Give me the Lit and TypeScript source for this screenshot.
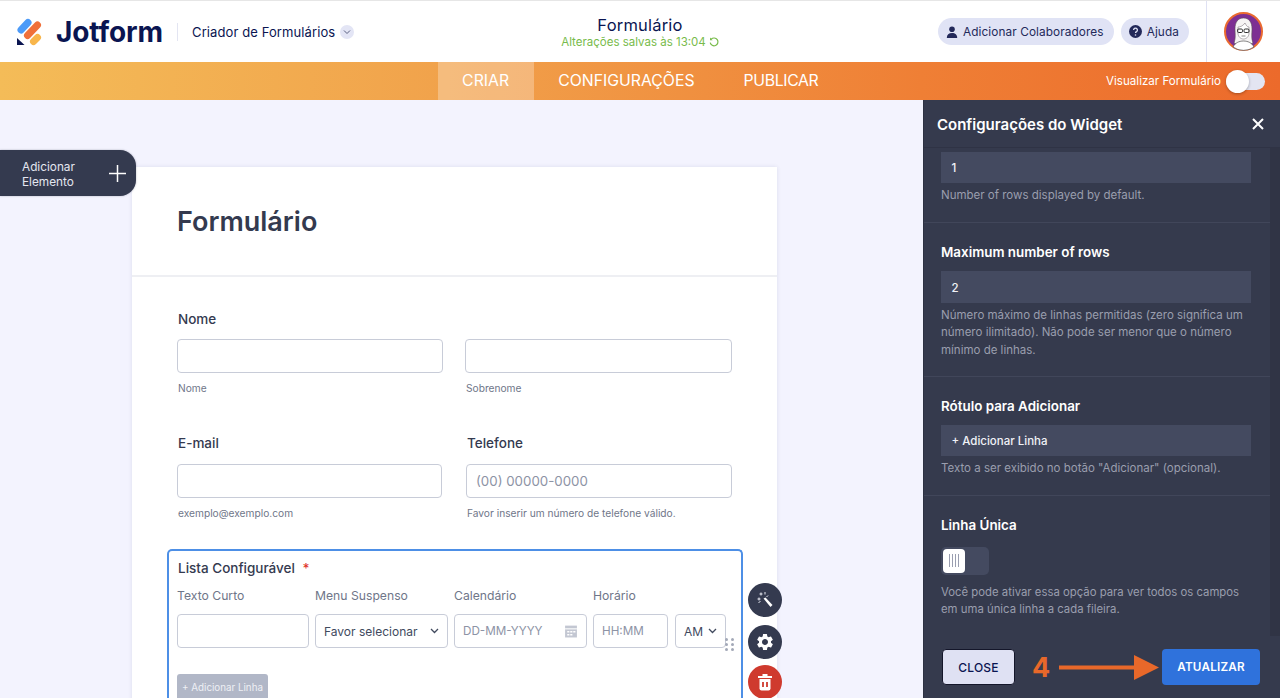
import { LitElement, css, html } from "lit";
import { customElement } from "lit/decorators.js";

@customElement("app-root")
export class AppRoot extends LitElement {
  static styles = css`
    :host {
      display: flex;
      flex-direction: column;
      height: 698px;
      overflow: hidden;
      font-family: Inter, "Liberation Sans", sans-serif;
      color: #2c3345;
      background: #f3f3fe;
    }
    * { box-sizing: border-box; }

    /* top bar */
    .topbar {
      height: 62px;
      flex: none;
      display: grid;
      grid-template-columns: 1fr auto 1fr;
      align-items: center;
      background: #fff;
      border-top: 1px solid #e6e6e6;
    }
    .brand { display: flex; align-items: center; padding-left: 17px; }
    .logo { width: 25px; height: 28px; display: block; }
    .wordmark {
      margin-left: 14px;
      font: 700 28px/32px Inter, sans-serif;
      letter-spacing: -0.1px;
      color: #0a1551;
    }
    .brand-sep { width: 1px; height: 18px; background: #e3e5f2; margin: 0 14px; }
    .brand-name { font-size: 13px; letter-spacing: 0.1px; color: #0a1551; }
    .chev {
      width: 14px; height: 14px; margin-left: 5px; border-radius: 50%;
      background: #e3e5f5; display: flex; align-items: center; justify-content: center;
    }
    .doc { text-align: center; }
    .doc-title { font-size: 16.5px; line-height: 20px; color: #0a1551; letter-spacing: 0.2px; }
    .doc-saved {
      font-size: 11.5px; line-height: 14px; color: #78bb4b;
      display: flex; align-items: center; gap: 3px;
    }
    .top-right { display: flex; justify-content: flex-end; align-items: center; height: 100%; }
    .pill {
      height: 27px; border-radius: 14px; background: #e0e3f5; color: #23295a;
      font-size: 11.8px; display: flex; align-items: center; gap: 5px; padding: 0 10px 0 8px;
      margin-left: 7px; letter-spacing: 0.1px;
    }
    .avatar-cell {
      width: 74px; margin-left: 17px; height: 100%;
      border-left: 1px solid #dfe1f3;
      display: flex; align-items: center; justify-content: center;
    }

    /* orange nav */
    .nav {
      height: 38px;
      flex: none;
      display: grid;
      grid-template-columns: 1fr auto 1fr;
      background: linear-gradient(90deg, #f4bc58 0%, #f1a24b 35%, #ef7f35 72%, #ec6a2b 100%);
      color: #fff;
    }
    .tabs { display: flex; grid-column: 2; }
    .tab { padding: 0 24.5px; font-size: 15.8px; line-height: 38px; }
    .tab:last-child { padding-right: 24px; letter-spacing: -0.35px; }
    .tab.on { background: rgba(255, 255, 255, 0.28); }
    .preview {
      display: flex; align-items: center; justify-content: flex-end;
      padding-right: 15px; font-size: 11.6px; gap: 5px;
    }
    .switch { width: 39px; height: 17px; border-radius: 9px; background: #e3e5f2; position: relative; }
    .switch i {
      position: absolute; left: 0; top: -3px; width: 23px; height: 23px;
      border-radius: 50%; background: #fff; box-shadow: 0 1px 3px rgba(0, 0, 0, 0.3);
    }

    /* main */
    .main { flex: 1; display: flex; min-height: 0; }
    .canvas { flex: 1; min-width: 0; position: relative; overflow: hidden; padding: 67px 0 0 132px; }
    .add {
      position: absolute; left: 0; top: 50px; width: 136px; height: 46px;
      border-radius: 0 16px 16px 0; background: #343a4f; color: #e4e6f0;
      display: flex; align-items: center; justify-content: space-between;
      padding: 4px 10px 0 22px; font-size: 11.8px; line-height: 15px;
      box-shadow: 0 0 2px rgba(52, 58, 79, 0.4); z-index: 2;
    }
    .add svg { margin-top: -4px; }
    .card {
      width: 645px; background: #fff; height: 600px;
      box-shadow: 0 0 4px rgba(60, 65, 110, 0.12);
    }
    .card-head {
      height: 110px; display: flex; align-items: center; padding: 0 0 0 45px;
      border-bottom: 2px solid #eeeff3;
    }
    .card-head h1 { margin: 0; font-size: 27px; font-weight: 600; color: #343a4f; }
    .card-body { padding: 33px 0 0 35px; }
    .row { display: grid; margin-left: 10px; }
    .row.a { grid-template-columns: 266px 267px; column-gap: 22px; }
    .row.b { grid-template-columns: 265px 266px; column-gap: 24px; margin-top: 39px; }
    .lab { font-size: 13.5px; line-height: 18px; font-weight: 500; color: #343a4f; padding-left: 1px; }
    .box {
      height: 34px; border: 1px solid #c8ccd8; border-radius: 4px; background: #fff;
      display: flex; align-items: center; color: #8d93a5; font-size: 13.3px; padding: 0 9px;
      margin-top: 11px; justify-content: space-between;
    }
    .row.b .box { margin-top: 12px; }
    .sub { font-size: 10.2px; line-height: 14px; margin-top: 8px; color: #6f7689; padding-left: 1px; }
    .list {
      position: relative; margin-top: 29px; width: 576px; height: 170px;
      border: 2px solid #4d8fe6; border-bottom: 0; border-radius: 5px 5px 0 0; padding: 8px 0 0 8px;
    }
    .list-title { font-size: 13.5px; line-height: 18px; font-weight: 500; color: #343a4f; padding-left: 1px; }
    .list-title b { color: #e0352b; margin-left: 4px; font-weight: 500; }
    .cells {
      display: grid; grid-template-columns: 132px 133px 133px 75px 52px; column-gap: 6px; margin-top: 11px;
    }
    .cell-lab { font-size: 12.2px; line-height: 16px; color: #6f7689; grid-row: 1; }
    .cell-box { grid-row: 2; padding: 0 8px; margin-top: 10px; font-size: 11.7px; }
    .cell-box.val { color: #414a5e; font-size: 12px; }
    .cell-box.am { margin-left: 1px; width: 51px; }
    .addline {
      width: 91px; height: 30px; margin-top: 26px; background: #b1b7c7; border-radius: 3px;
      color: #eef0f5; font-size: 9.8px; line-height: 28px; text-align: center;
    }
    .dots {
      position: absolute; left: 556px; top: 87px; display: grid;
      grid-template-columns: 3px 3px; gap: 2px 3px;
    }
    .dots i { width: 3px; height: 3px; border-radius: 50%; background: #a3a9b8; }
    .fab {
      position: absolute; left: 579px; width: 34px; height: 34px; border-radius: 50%;
      background: #343a4f; display: flex; align-items: center; justify-content: center;
    }
    .fab.wand { top: 32px; }
    .fab.gear { top: 74px; }
    .fab.red { top: 114px; background: #cf3a2e; }

    /* widget panel */
    .panel {
      width: 357px; flex: none; display: flex; flex-direction: column; background: #353a4d;
      border-left: 1px solid #2d3142; color: #fff;
    }
    .panel-head {
      height: 48px; flex: none; display: flex; align-items: center; justify-content: space-between;
      padding: 1px 16px 0 13px; font-size: 15px; font-weight: 600; border-bottom: 1px solid #2f3345;
    }
    .panel-body { flex: 1; min-height: 0; display: flex; overflow: hidden; }
    .sections { width: 346px; flex: none; }
    .scroll { flex: 1; background: #303445; }
    .section { padding: 20px 19px 17px 17px; border-bottom: 1px solid #41465a; }
    .section:first-child { padding-top: 4px; }
    .section:last-child { border-bottom: 0; }
    .section h3 { margin: 0; font-size: 13.4px; line-height: 18px; font-weight: 600; }
    .field {
      height: 31px; background: #444a60; font-size: 11.5px; line-height: 31px; font-weight: 500;
      padding: 1px 0 0 10.5px; margin-top: 10px; color: #f1f2f7;
    }
    .field.tall { height: 32px; line-height: 32px; }
    .section:first-child .field { margin-top: 0; }
    .hint { margin: 4px 0 0; font-size: 11.5px; line-height: 17.5px; color: #9a9eae; }
    .grid-toggle {
      width: 48px; height: 28px; margin: 13px 0 9px; border-radius: 5px; background: #444a60;
      padding: 2px;
    }
    .grid-toggle i {
      display: flex; gap: 2px; justify-content: center; align-items: center;
      width: 22px; height: 24px; background: #fff; border-radius: 4px;
    }
    .grid-toggle u { width: 1px; height: 13px; background: #9a9eb0; display: block; }
    .grid-toggle + .hint { font-size: 11.35px; }
    .panel-foot {
      height: 62px; flex: none; display: flex; align-items: center; padding: 0 20px 0 18px;
    }
    .btn {
      height: 36px; border-radius: 4px; font-size: 12px; font-weight: 500;
      display: flex; align-items: center; justify-content: center; letter-spacing: 0.2px;
    }
    .close { width: 73px; background: #dfe1f3; color: #0a1551; border: 1px solid #14162a; }
    .update { width: 98px; background: #2f72dc; color: #fff; font-size: 11.7px; font-weight: 600; margin-left: 3px; }
    .step { margin-left: 17px; font-size: 27px; font-weight: 700; color: #e8682a; width: 27px; }
    .arrow { width: 100px; height: 25px; display: block; flex: none; }
  `;

  render() {
    return html`
      <div class="topbar">
        <div class="brand">
          <svg class="logo" viewBox="17 15 25 28">
            <line x1="21" y1="27" x2="28" y2="19.5" stroke="#4d9bf8" stroke-width="7" stroke-linecap="round" />
            <line x1="27.5" y1="32.5" x2="37.5" y2="22" stroke="#f0703a" stroke-width="7" stroke-linecap="round" />
            <line x1="33.5" y1="38.5" x2="37.5" y2="34.5" stroke="#f8b64c" stroke-width="7" stroke-linecap="round" />
            <polygon points="17,35 17,42 24.5,42" fill="#0a1551" />
          </svg>
          <span class="wordmark">Jotform</span>
          <span class="brand-sep"></span>
          <span class="brand-name">Criador de Formulários</span>
          <span class="chev">
            <svg width="8" height="6" viewBox="0 0 8 6"><path d="M1 1.500l3 3 3-3" fill="none" stroke="#5a6080" stroke-width="1" /></svg>
          </span>
        </div>
        <div class="doc">
          <div class="doc-title">Formulário</div>
          <div class="doc-saved">
            Alterações salvas às 13:04
            <svg width="10" height="10" viewBox="0 0 10 10">
              <path d="M2.200 2.200A3.900 3.900 0 1 1 1.200 5.600" fill="none" stroke="#78bb4b" stroke-width="1.200" />
              <path d="M1 0.600v2.600h2.600z" fill="#78bb4b" />
            </svg>
          </div>
        </div>
        <div class="top-right">
          <div class="pill">
            <svg width="12" height="12" viewBox="0 0 12 12">
              <circle cx="6" cy="3.200" r="2.800" fill="#23295a" />
              <path d="M0.800 12c0-3.400 2-5 5.200-5s5.200 1.600 5.200 5z" fill="#23295a" />
            </svg>
            Adicionar Colaboradores
          </div>
          <div class="pill">
            <svg width="13" height="13" viewBox="0 0 13 13">
              <circle cx="6.500" cy="6.500" r="6.500" fill="#23295a" />
              <path d="M4.600 5a1.900 1.900 0 1 1 2.900 1.600c-.7.4-1 .7-1 1.400" fill="none" stroke="#e0e3f5" stroke-width="1.300" />
              <circle cx="6.500" cy="10" r=".8" fill="#e0e3f5" />
            </svg>
            Ajuda
          </div>
          <div class="avatar-cell">
            <svg width="39" height="39" viewBox="0 0 39 39">
              <circle cx="19.500" cy="19.500" r="18.500" fill="#7d2f93" stroke="#ea6a30" stroke-width="2" />
              <path d="M10 31c2-5 1-10 1-14 0-7 3-11 8.500-11S28 10 28 17c0 4-1 9 1 14-3 2-16 2-19 0z" fill="#f6f4f4" stroke="#5a5058" stroke-width=".6" />
              <path d="M14 15c2 0 5-1 7-4 1 2 2 4 4 4v6c0 4-3 6-5.500 6S14 25 14 21z" fill="#fff" stroke="#6a6068" stroke-width=".5" />
              <rect x="13.500" y="17" width="5" height="3.500" rx="1.200" fill="none" stroke="#2c2c2c" stroke-width="1" />
              <rect x="20" y="17" width="5" height="3.500" rx="1.200" fill="none" stroke="#2c2c2c" stroke-width="1" />
              <path d="M17.500 24h4" stroke="#555" stroke-width=".7" />
              <path d="M9 35c2-4 6-6 10.500-6S28 31 30 35a18 18 0 0 1-21 0z" fill="#fff" stroke="#333" stroke-width=".6" />
            </svg>
          </div>
        </div>
      </div>

      <div class="nav">
        <div class="tabs">
          <div class="tab on">CRIAR</div>
          <div class="tab">CONFIGURAÇÕES</div>
          <div class="tab">PUBLICAR</div>
        </div>
        <div class="preview">Visualizar Formulário <span class="switch"><i></i></span></div>
      </div>

      <div class="main">
        <div class="canvas">
          <div class="add">
            <span>Adicionar<br />Elemento</span>
            <svg width="17" height="17" viewBox="0 0 17 17"><path d="M8.500 0v17M0 8.500h17" stroke="#fff" stroke-width="1.500" /></svg>
          </div>
          <div class="card">
            <div class="card-head"><h1>Formulário</h1></div>
            <div class="card-body">
              <div class="row a">
                <div class="col"><div class="lab">Nome</div><div class="box"></div><div class="sub">Nome</div></div>
                <div class="col"><div class="lab">&nbsp;</div><div class="box"></div><div class="sub">Sobrenome</div></div>
              </div>
              <div class="row b">
                <div class="col"><div class="lab">E-mail</div><div class="box"></div><div class="sub">exemplo@exemplo.com</div></div>
                <div class="col"><div class="lab">Telefone</div><div class="box">(00) 00000-0000</div><div class="sub">Favor inserir um número de telefone válido.</div></div>
              </div>
              <div class="list">
                <div class="list-title">Lista Configurável <b>*</b></div>
                <div class="cells">
                  <div class="cell-lab">Texto Curto</div>
                  <div class="cell-lab">Menu Suspenso</div>
                  <div class="cell-lab">Calendário</div>
                  <div class="cell-lab">Horário</div>
                  <div class="cell-lab"></div>
                  <div class="box cell-box"></div>
                  <div class="box cell-box val">Favor selecionar ${chevron()}</div>
                  <div class="box cell-box">DD-MM-YYYY
                    <svg width="14" height="14" viewBox="0 0 13 13">
                      <path d="M1 1.500h11v11H1z" fill="#c3c7d2" />
                      <path d="M1 4.500h11" stroke="#fff" stroke-width="1" />
                      <path d="M3 6.500h2v1.500H3zM5.800 6.500h2v1.500h-2zM8.600 6.500h2v1.500h-2zM3 9.200h2v1.500H3zM5.800 9.200h2v1.500h-2z" fill="#fff" />
                    </svg>
                  </div>
                  <div class="box cell-box">HH:MM</div>
                  <div class="box cell-box val am">AM ${chevron()}</div>
                </div>
                <div class="addline">+ Adicionar Linha</div>
                <div class="dots"><i></i><i></i><i></i><i></i><i></i><i></i></div>
                <div class="fab wand">
                  <svg width="18" height="18" viewBox="0 0 18 18">
                    <path d="M7.500 7.500l2-1 7 7.500-2 2z" fill="#fff" />
                    <path d="M5 1.500v3M3.500 3h3M1.500 8h3M3 6.500v3M9 1v2.500M12 4.500l-1.500 1.500M2.500 12l2-2" stroke="#e6e8f0" stroke-width="1" fill="none" />
                  </svg>
                </div>
                <div class="fab gear">
                  <svg width="20" height="20" viewBox="0 0 24 24"><path fill="#fff" d="M19.140 12.940c.04-.3.06-.61.06-.94 0-.32-.02-.64-.07-.94l2.030-1.580a.49.49 0 0 0 .12-.61l-1.920-3.320a.488.488 0 0 0-.59-.22l-2.390.96c-.5-.38-1.030-.7-1.620-.94l-.36-2.540a.484.484 0 0 0-.48-.41h-3.840c-.24 0-.43.17-.47.41l-.36 2.540c-.59.24-1.130.57-1.620.94l-2.390-.96c-.22-.08-.47 0-.59.22L2.740 8.870c-.12.21-.08.47.12.61l2.030 1.580c-.05.3-.09.63-.09.94s.02.64.07.94l-2.030 1.580a.49.49 0 0 0-.12.61l1.920 3.320c.12.22.37.29.59.22l2.390-.96c.5.38 1.030.7 1.620.94l.36 2.540c.05.24.24.41.48.41h3.840c.24 0 .44-.17.47-.41l.36-2.540c.59-.24 1.130-.56 1.620-.94l2.390.96c.22.08.47 0 .59-.22l1.920-3.320c.12-.22.07-.47-.12-.61l-2.010-1.580zM12 15.600c-1.980 0-3.600-1.620-3.600-3.600s1.620-3.600 3.600-3.600 3.600 1.620 3.600 3.600-1.620 3.600-3.600 3.600z" /></svg>
                </div>
                <div class="fab red">
                  <svg width="16" height="18" viewBox="0 0 16 18">
                    <path d="M1 3h14v2H1zM5.500 1h5v2h-5z" fill="#fff" />
                    <path d="M2.500 6h11v9.500a2 2 0 0 1-2 2h-7a2 2 0 0 1-2-2z" fill="#fff" />
                    <path d="M6 9v5M10 9v5" stroke="#cf3a2e" stroke-width="1.800" />
                  </svg>
                </div>
              </div>
            </div>
          </div>
        </div>

        <div class="panel">
          <div class="panel-head">
            Configurações do Widget
            <svg width="12" height="12" viewBox="0 0 12 12"><path d="M1 1l10 10M11 1L1 11" stroke="#fff" stroke-width="2" /></svg>
          </div>
          <div class="panel-body">
            <div class="sections">
              <div class="section">
                <div class="field">1</div>
                <p class="hint">Number of rows displayed by default.</p>
              </div>
              <div class="section">
                <h3>Maximum number of rows</h3>
                <div class="field tall">2</div>
                <p class="hint">Número máximo de linhas permitidas (zero significa um número ilimitado). Não pode ser menor que o número mínimo de linhas.</p>
              </div>
              <div class="section">
                <h3>Rótulo para Adicionar</h3>
                <div class="field">+ Adicionar Linha</div>
                <p class="hint">Texto a ser exibido no botão "Adicionar" (opcional).</p>
              </div>
              <div class="section">
                <h3>Linha Única</h3>
                <div class="grid-toggle"><i><u></u><u></u><u></u><u></u></i></div>
                <p class="hint">Você pode ativar essa opção para ver todos os campos em uma única linha a cada fileira.</p>
              </div>
            </div>
            <div class="scroll"></div>
          </div>
          <div class="panel-foot">
            <div class="btn close">CLOSE</div>
            <span class="step">4</span>
            <svg class="arrow" viewBox="0 0 100 25">
              <path d="M0 10.500h75V0l25 12.500L75 25V14.500H0z" fill="#e8682a" />
            </svg>
            <div class="btn update">ATUALIZAR</div>
          </div>
        </div>
      </div>
    `;
  }
}

function chevron() {
  return html`<svg width="9" height="6" viewBox="0 0 9 6"><path d="M1 1l3.500 3.500L8 1" fill="none" stroke="#414a5e" stroke-width="1.300" /></svg>`;
}
